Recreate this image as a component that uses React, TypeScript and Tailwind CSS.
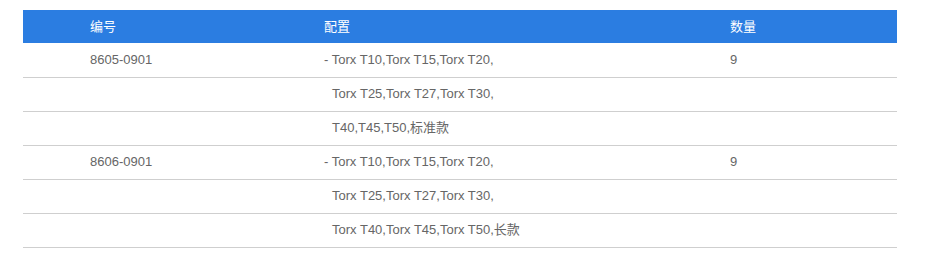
const rows = [
  { code: '8605-0901', lines: ['- Torx T10,Torx T15,Torx T20,', 'Torx T25,Torx T27,Torx T30,', 'T40,T45,T50,标准款'], qty: '9' },
  { code: '8606-0901', lines: ['- Torx T10,Torx T15,Torx T20,', 'Torx T25,Torx T27,Torx T30,', 'Torx T40,Torx T45,Torx T50,长款'], qty: '9' },
];

export default function App() {
  return (
    <div
      className="bg-white px-[23px] pt-[10px] w-[948px] h-[277px] text-[13px] text-[#666]"
      style={{ fontFamily: '"Liberation Sans", Arial, "Noto Sans CJK SC", sans-serif' }}
    >
      <table className="w-[874px] border-collapse table-fixed">
        <colgroup>
          <col className="w-[234px]" />
          <col className="w-[406px]" />
          <col className="w-[234px]" />
        </colgroup>
        <thead>
          <tr className="bg-[#2b7de1] text-white h-[33px]">
            <th className="text-left font-normal pl-[67px]">编号</th>
            <th className="text-left font-normal pl-[67px]">配置</th>
            <th className="text-left font-normal pl-[67px]">数量</th>
          </tr>
        </thead>
        <tbody>
          {rows.map((r) =>
            r.lines.map((line, i) => (
              <tr key={r.code + i} className="h-[34px] border-b border-[#cfcfcf]">
                <td className="pl-[67px]">{i === 0 ? r.code : ''}</td>
                <td className="pl-[67px]">
                  <span className={i === 0 ? '' : 'ml-[8px]'}>{line}</span>
                </td>
                <td className="pl-[67px]">{i === 0 ? r.qty : ''}</td>
              </tr>
            ))
          )}
        </tbody>
      </table>
    </div>
  );
}
